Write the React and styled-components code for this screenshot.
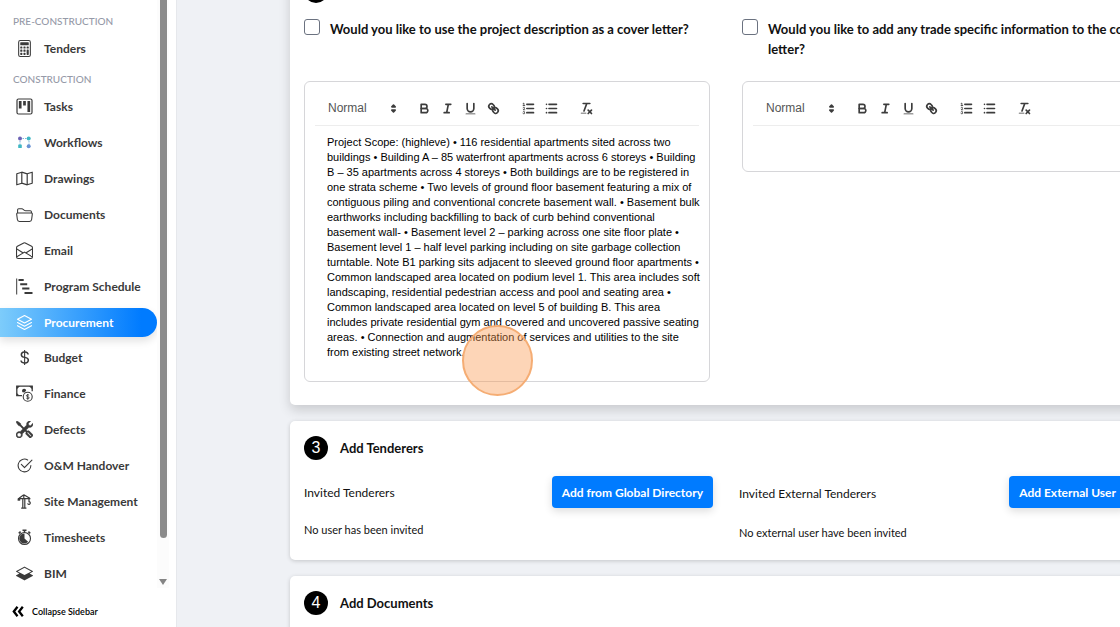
import { useState } from "react";
import styled, { createGlobalStyle } from "styled-components";
import {
  BsCalculator,
  BsCheck2Circle,
  BsCurrencyDollar,
  BsEnvelopeOpen,
  BsFolder2Open,
  BsLayersHalf,
  BsTools,
} from "react-icons/bs";

const GlobalStyle = createGlobalStyle`
  * {
    box-sizing: border-box;
  }
  body {
    margin: 0;
    font-family: Lato, sans-serif;
    color: #111;
    background-color: #eff1f5;
  }
`;

const Page = styled.div`
  display: flex;
  height: 100vh;
  overflow: hidden;
`;

/* Sidebar */

const Sidebar = styled.aside`
  flex: 0 0 176px;
  display: flex;
  flex-direction: column;
  background-color: #fff;
`;

const SidebarBody = styled.div`
  flex: 1;
  display: flex;
  min-height: 0;
`;

const Nav = styled.nav`
  flex: 0 0 157px;
  display: flex;
  flex-direction: column;
  padding-top: 13px;
`;

const GroupTitle = styled.h2`
  margin: 0;
  padding-left: 13px;
  font-size: 10px;
  line-height: 16px;
  font-weight: 500;
  color: #969aa8;
`;

const NavList = styled.ul`
  list-style: none;
  margin: 0;
  display: flex;
  flex-direction: column;
  justify-content: space-between;
  flex: ${(props) => (props.$fill ? "1" : "none")};
  padding: ${(props) => (props.$fill ? "5px 0 0" : "5px 0 8px")};
`;

const NavLink = styled.a`
  display: flex;
  align-items: center;
  gap: 11px;
  height: 29px;
  padding-left: 16px;
  font-size: 12px;
  font-weight: 700;
  text-decoration: none;
  color: ${(props) => (props.$active ? "#fff" : "#3a3a3a")};
  background: ${(props) =>
    props.$active ? "linear-gradient(90deg, #7dccfb 0%, #007bff 90%)" : "none"};
  border-radius: 0 15px 15px 0;
  box-shadow: ${(props) =>
    props.$active ? "0 4px 8px rgba(0, 0, 0, 0.12)" : "none"};

  svg {
    flex: none;
    width: 17px;
    height: 17px;
  }
`;

const Scrollbar = styled.div`
  flex: 0 0 12px;
  display: flex;
  flex-direction: column;
  align-items: center;
  gap: 41px;
  padding-bottom: 3px;
  background-color: #fcfcfc;
`;

const Thumb = styled.div`
  flex: 1;
  width: 7px;
  background-color: #8b8b8b;
  border-radius: 0 0 4px 4px;
`;

const ScrollArrow = styled.div`
  border: 4px solid transparent;
  border-top: 6px solid #858585;
  border-bottom: 0;
`;

const CollapseButton = styled.button`
  display: flex;
  align-items: center;
  gap: 8px;
  height: 39px;
  padding: 16px 0 8px 12px;
  border: none;
  background: none;
  font-family: inherit;
  font-size: 9px;
  font-weight: 600;
  color: #000;
  cursor: pointer;
`;

/* Main content */

const Main = styled.main`
  flex: 1;
  min-width: 0;
  overflow: hidden;
  padding-left: 113px;
  border-left: 1px solid #e6e8ec;
`;

/* the form is scrolled down to its second step */
const Form = styled.form`
  display: flex;
  flex-direction: column;
  gap: 16px;
  min-width: 872px;
  margin-top: -36px;
`;

const Card = styled.section`
  padding: 15px 14px 0;
  padding-bottom: ${(props) => props.$bottom || 19}px;
  background-color: #fff;
  border-radius: 5px;
  box-shadow: ${(props) =>
    props.$raised
      ? "0 5px 12px rgba(0, 0, 0, 0.16)"
      : "0 1px 4px rgba(0, 0, 0, 0.18)"};
`;

const StepHeading = styled.div`
  display: flex;
  align-items: center;
  gap: 12px;
  margin-bottom: 16px;
`;

const StepNumber = styled.span`
  width: 24px;
  height: 24px;
  line-height: 24px;
  border-radius: 50%;
  background-color: #000;
  color: #fff;
  font-family: "Liberation Sans", sans-serif;
  font-size: 16px;
  text-align: center;
`;

const StepTitle = styled.h3`
  margin: 0;
  font-size: 13px;
  line-height: 20px;
  font-weight: 700;
`;

const Columns = styled.div`
  display: grid;
  grid-template-columns: 1fr 1fr;
  align-items: start;
  column-gap: ${(props) => props.$gap}px;
`;

const Question = styled.label`
  display: flex;
  align-items: flex-start;
  gap: 10px;
  min-height: 62px;
  font-size: 13px;
  line-height: 20px;
  font-weight: 700;
`;

const Checkbox = styled.input`
  appearance: none;
  flex: none;
  width: 16px;
  height: 16px;
  margin: 0;
  border: 1px solid #6b7280;
  border-radius: 3px;
  background-color: #fff;

  &:checked {
    background-color: #007bff;
  }
`;

const EditorBox = styled.div`
  position: relative;
  padding: 11px 0 21px;
  border: 1px solid #d6d6d9;
  border-radius: 6px;
`;

const Toolbar = styled.div`
  display: flex;
  align-items: center;
  gap: 12px;
  height: 33px;
  margin: 0 10px;
  padding: 0 6px 2px;
  border-bottom: 1px solid #ededed;
`;

const Picker = styled.div`
  position: relative;
  width: 80px;

  svg {
    position: absolute;
    top: 0;
    right: 0;
    pointer-events: none;
  }
`;

const PickerSelect = styled.select`
  appearance: none;
  display: block;
  width: 100%;
  height: 15px;
  padding: 0 0 0 7px;
  border: none;
  background: none;
  font-family: "Liberation Sans", sans-serif;
  font-size: 12px;
  line-height: 15px;
  color: #555;
`;

const ToolGroup = styled.div`
  display: flex;
`;

const ToolButton = styled.button`
  display: flex;
  justify-content: center;
  width: 23px;
  padding: 0;
  border: none;
  background: none;
  cursor: pointer;
`;

const EditorText = styled.textarea`
  display: block;
  width: 100%;
  min-height: 15px;
  field-sizing: content;
  resize: none;
  overflow: hidden;
  margin: 9px 0 0;
  padding: 0 6px 0 22px;
  border: none;
  outline: none;
  background: none;
  font-family: "Liberation Sans", sans-serif;
  font-size: 11px;
  line-height: 15px;
  color: #000;
`;

const ClickMarker = styled.div`
  position: absolute;
  left: 157px;
  top: 243px;
  width: 71px;
  height: 71px;
  border: 2px solid #f5ad74;
  border-radius: 50%;
  background-color: rgba(249, 150, 75, 0.4);
  pointer-events: none;
`;

const TenderColumn = styled.div`
  padding-right: ${(props) => (props.$inset ? "22px" : "0")};
`;

const TenderHeader = styled.div`
  display: flex;
  align-items: center;
  justify-content: space-between;
  min-height: ${(props) => (props.$tall ? "35px" : "32px")};
  margin-bottom: 13px;
  font-size: 12px;
`;

const PrimaryButton = styled.button`
  align-self: flex-start;
  height: 32px;
  padding: 0 10px;
  border: none;
  border-radius: 4px;
  background-color: #007bff;
  color: #fff;
  font-family: inherit;
  font-size: 12px;
  font-weight: 700;
  box-shadow: 0 3px 8px rgba(0, 0, 0, 0.14);
  cursor: pointer;
`;

const EmptyNote = styled.p`
  margin: 0;
  font-size: 11px;
  line-height: 17px;
`;

/* Icons */

const Kanban = () => (
  <svg viewBox="0 0 17 17" fill="none">
    <rect x="1" y="1" width="15" height="15" rx="1.5" stroke="currentColor" strokeWidth="1.2" />
    <path d="M4.2 3v7.6M8.5 3v4.5M12.8 3v11" stroke="currentColor" strokeWidth="2.7" />
  </svg>
);

const Workflow = () => (
  <svg viewBox="0 0 17 17">
    <path d="M4 4.5h9M4 4.5v9M13 4.5v9" stroke="#7fb6dc" strokeDasharray="1.5 1" fill="none" />
    <circle cx="4" cy="4.5" r="2" fill="#6d62b5" />
    <circle cx="12.7" cy="4.5" r="2" fill="#3fb8c4" />
    <rect x="2.2" y="10.5" width="3.6" height="3.6" rx="0.6" fill="#3fb8c4" />
    <circle cx="12.7" cy="12.3" r="2" fill="#6a93d4" />
  </svg>
);

const FoldedMap = () => (
  <svg viewBox="0 0 17 17" fill="none" stroke="currentColor" strokeWidth="1.2" strokeLinejoin="round">
    <path d="M.8 3.8 5.8 2.2 11.2 3.8 16.2 2.2V13.2L11.2 14.8 5.8 13.2.8 14.8ZM5.8 2.2V13.2M11.2 3.8V14.8" />
  </svg>
);

const Gantt = () => (
  <svg viewBox="0 0 17 17" fill="none" stroke="currentColor">
    <path d="M.7 .5v16" strokeWidth="1" />
    <path d="M2.5 2h5.2M4.2 6.3h7M6.2 10.5h7.2M8.5 14.9h8" strokeWidth="2" />
  </svg>
);

const Stack = () => (
  <svg viewBox="0 0 17 17" fill="none" stroke="currentColor" strokeWidth="1.1" strokeLinejoin="round" strokeLinecap="round">
    <path d="M8.5 1.5 15.5 5.2 8.5 9 1.5 5.2Z" />
    <path d="M1.5 8.5 8.5 12.3 15.5 8.5M1.5 11.7 8.5 15.5 15.5 11.7" />
  </svg>
);

const Money = () => (
  <svg viewBox="0 0 17 17" fill="none" stroke="currentColor">
    <path d="M6 10.6H.8V1.2h15.4v5" strokeWidth="1.3" />
    <path d="M.5 1h3.6L.5 4.4ZM16.5 1h-3.6l3.6 3.4ZM.5 10.9V7.7l3.4 3.2Z" fill="currentColor" stroke="none" />
    <path d="M6.6 7.2a2.1 2.1 0 1 1 3.6-1.8L8.5 7.5Z" fill="currentColor" stroke="none" />
    <circle cx="11.7" cy="11.8" r="4.5" strokeWidth="1.1" />
    <path d="M13.1 10.4c-.4-.9-2.7-.9-2.7.3 0 1.3 2.8.8 2.8 2.2 0 1.2-2.5 1.2-2.9.1M11.7 9v5.6" strokeWidth="0.9" />
  </svg>
);

const Tools = styled(BsTools)`
  stroke: currentColor;
  stroke-width: 0.5;
`;

const Crane = () => (
  <svg viewBox="0 0 17 17" fill="none" stroke="currentColor" strokeWidth="1.2">
    <path d="M2 5.6h12.4M8.8 5v9.5M6.8 5v9.5M5.2 15.2h5.2M7.8 1.8 3 5.2M7.8 1.8l6 3.4M7.8 1.5V5" />
    <path d="M1.6 5.5h2.6v2.2H1.6Z" fill="currentColor" stroke="none" />
    <path d="M13 5.5v3.2c1.6.1 1.8 2.2.3 2.6-.8.2-1.5-.2-1.7-.9" />
  </svg>
);

const Stopwatch = () => (
  <svg viewBox="0 0 17 17" fill="none" stroke="currentColor">
    <circle cx="8.5" cy="9.5" r="6" strokeWidth="1.1" />
    <path d="M8.5 4.6v4.9l3.6 3.3A5 5 0 1 1 8.5 4.6Z" fill="currentColor" stroke="none" />
    <path d="M6.5 1.2h4M8.5 1.2v2.3" strokeWidth="1.5" />
    <path d="M2.8 4.3 4.6 2.7M14.2 4.3 12.4 2.7" strokeWidth="1.7" />
  </svg>
);

const DoubleChevron = () => (
  <svg width="12" height="11" viewBox="0 0 12 11" fill="none" stroke="#000" strokeWidth="2.3">
    <path d="M5.5 .8 1.8 5.5 5.5 10.2M10.8 .8 7.1 5.5 10.8 10.2" />
  </svg>
);

const ToolSvg = styled.svg`
  display: block;
  width: 15px;
  height: 15px;
  fill: none;
  stroke: #3c3c3c;
  stroke-width: 2;
  stroke-linecap: round;
  stroke-linejoin: round;

  .fill {
    fill: #3c3c3c;
    stroke: none;
  }
  .solid {
    fill: #3c3c3c;
  }
  .thin {
    stroke-width: 1;
  }
`;

const toolGroups = [
  [
    {
      label: "Bold",
      icon: (
        <>
          <path d="M5,4H9.5A2.5,2.5,0,0,1,12,6.5v0A2.5,2.5,0,0,1,9.5,9H5V4Z" />
          <path d="M5,9h5.5A2.5,2.5,0,0,1,13,11.5v0A2.5,2.5,0,0,1,10.5,14H5V9Z" />
        </>
      ),
    },
    {
      label: "Italic",
      icon: <path d="M7 4H13M5 14H11M8 14L10 4" />,
    },
    {
      label: "Underline",
      icon: (
        <>
          <path d="M5,3V9a4,4,0,0,0,4,4H9a4,4,0,0,0,4-4V3" />
          <rect className="fill" x="3" y="15" width="12" height="1" rx="0.5" />
        </>
      ),
    },
    {
      label: "Link",
      icon: (
        <>
          <path d="M7 7L11 11" />
          <path d="M8.9,4.577a3.476,3.476,0,0,1,.36,4.679A3.476,3.476,0,0,1,4.577,8.9C3.185,7.5,2.035,6.4,4.217,4.217S7.5,3.185,8.9,4.577Z" />
          <path d="M13.423,9.1a3.476,3.476,0,0,0-4.679-.36,3.476,3.476,0,0,0,.36,4.679c1.392,1.392,2.5,2.542,4.679.36S14.815,10.5,13.423,9.1Z" />
        </>
      ),
    },
  ],
  [
    {
      label: "Numbered list",
      icon: (
        <>
          <path d="M7 4H15M7 9H15M7 14H15" />
          <path className="thin" d="M2.5 5.5H4.5M3.5 5.5V2.5L2.5 3" />
          <path className="thin" d="M4.5,10.5h-2c0-.234,1.85-1.076,1.85-2.234A0.959,0.959,0,0,0,2.5,8.156" />
          <path className="thin" d="M2.5,14.846a0.959,0.959,0,0,0,1.85-.109A0.7,0.7,0,0,0,3.75,14a0.688,0.688,0,0,0,.6-0.736,0.959,0.959,0,0,0-1.85-.109" />
        </>
      ),
    },
    {
      label: "Bulleted list",
      icon: <path d="M6 4H15M6 9H15M6 14H15M3 4H3M3 9H3M3 14H3" />,
    },
  ],
  [
    {
      label: "Clear formatting",
      icon: (
        <>
          <path d="M5 3H13M6 12L9.35 3M11 11L15 15M15 11L11 15" />
          <rect className="fill" x="2" y="14" width="7" height="1" rx="0.5" />
        </>
      ),
    },
  ],
];

const constructionItems = [
  { name: "Tasks", Icon: Kanban },
  { name: "Workflows", Icon: Workflow },
  { name: "Drawings", Icon: FoldedMap },
  { name: "Documents", Icon: BsFolder2Open },
  { name: "Email", Icon: BsEnvelopeOpen },
  { name: "Program Schedule", Icon: Gantt },
  { name: "Procurement", Icon: Stack },
  { name: "Budget", Icon: BsCurrencyDollar },
  { name: "Finance", Icon: Money },
  { name: "Defects", Icon: Tools },
  { name: "O&M Handover", Icon: BsCheck2Circle },
  { name: "Site Management", Icon: Crane },
  { name: "Timesheets", Icon: Stopwatch },
  { name: "BIM", Icon: BsLayersHalf },
];

const projectScope =
  "Project Scope: (highleve) • 116 residential apartments sited across two buildings • Building A – 85 waterfront apartments across 6 storeys • Building B – 35 apartments across 4 storeys • Both buildings are to be registered in one strata scheme • Two levels of ground floor basement featuring a mix of contiguous piling and conventional concrete basement wall. • Basement bulk earthworks including backfilling to back of curb behind conventional basement wall- • Basement level 2 – parking across one site floor plate • Basement level 1 – half level parking including on site garbage collection turntable. Note B1 parking sits adjacent to sleeved ground floor apartments • Common landscaped area located on podium level 1. This area includes soft landscaping, residential pedestrian access and pool and seating area • Common landscaped area located on level 5 of building B. This area includes private residential gym and covered and uncovered passive seating areas. • Connection and augmentation of services and utilities to the site from existing street network.";

const NavItem = ({ name, Icon, active, onSelect }) => (
  <li>
    <NavLink href="#" $active={active} onClick={() => onSelect(name)}>
      <Icon />
      {name}
    </NavLink>
  </li>
);

const Editor = ({ label, text, children }) => (
  <EditorBox>
    <Toolbar>
      <Picker>
        <PickerSelect aria-label="Text style">
          <option>Normal</option>
        </PickerSelect>
        <ToolSvg viewBox="0 0 18 18">
          <path className="solid" d="M7 11L9 13L11 11ZM7 7L9 5L11 7Z" />
        </ToolSvg>
      </Picker>
      {toolGroups.map((group) => (
        <ToolGroup key={group[0].label}>
          {group.map((tool) => (
            <ToolButton type="button" key={tool.label} aria-label={tool.label}>
              <ToolSvg viewBox="0 0 18 18">{tool.icon}</ToolSvg>
            </ToolButton>
          ))}
        </ToolGroup>
      ))}
    </Toolbar>
    <EditorText aria-label={label} defaultValue={text} spellCheck={false} />
    {children}
  </EditorBox>
);

const Step = ({ number, title }) => (
  <StepHeading>
    <StepNumber>{number}</StepNumber>
    {title && <StepTitle>{title}</StepTitle>}
  </StepHeading>
);

const App = () => {
  const [page, setPage] = useState("Procurement");

  return (
    <Page>
      <GlobalStyle />
      <Sidebar>
        <SidebarBody>
          <Nav>
            <GroupTitle>PRE-CONSTRUCTION</GroupTitle>
            <NavList>
              <NavItem
                name="Tenders"
                Icon={BsCalculator}
                active={page === "Tenders"}
                onSelect={setPage}
              />
            </NavList>
            <GroupTitle>CONSTRUCTION</GroupTitle>
            <NavList $fill>
              {constructionItems.map((item) => (
                <NavItem
                  key={item.name}
                  {...item}
                  active={page === item.name}
                  onSelect={setPage}
                />
              ))}
            </NavList>
          </Nav>
          <Scrollbar>
            <Thumb />
            <ScrollArrow />
          </Scrollbar>
        </SidebarBody>
        <CollapseButton>
          <DoubleChevron />
          Collapse Sidebar
        </CollapseButton>
      </Sidebar>
      <Main>
        <Form>
          <Card $raised $bottom={23}>
            <Step number={2} />
            <Columns $gap={32}>
              <div>
                <Question>
                  <Checkbox type="checkbox" />
                  Would you like to use the project description as a cover letter?
                </Question>
                <Editor label="Cover letter" text={projectScope}>
                  <ClickMarker />
                </Editor>
              </div>
              <div>
                <Question>
                  <Checkbox type="checkbox" />
                  Would you like to add any trade specific information to the cover letter?
                </Question>
                <Editor label="Trade specific information" text="" />
              </div>
            </Columns>
          </Card>
          <Card>
            <Step number={3} title="Add Tenderers" />
            <Columns $gap={26}>
              <TenderColumn>
                <TenderHeader>
                  Invited Tenderers
                  <PrimaryButton type="button">Add from Global Directory</PrimaryButton>
                </TenderHeader>
                <EmptyNote>No user has been invited</EmptyNote>
              </TenderColumn>
              <TenderColumn $inset>
                <TenderHeader $tall>
                  Invited External Tenderers
                  <PrimaryButton type="button">Add External User</PrimaryButton>
                </TenderHeader>
                <EmptyNote>No external user have been invited</EmptyNote>
              </TenderColumn>
            </Columns>
          </Card>
          <Card>
            <Step number={4} title="Add Documents" />
          </Card>
        </Form>
      </Main>
    </Page>
  );
};

export default App;
